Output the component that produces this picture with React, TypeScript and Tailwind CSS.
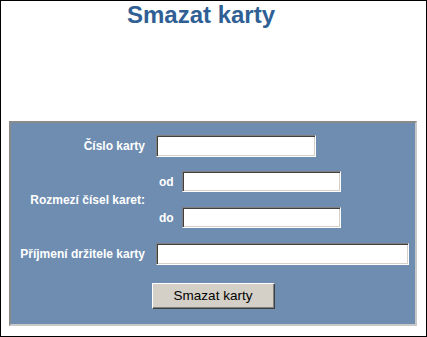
import React from 'react';

const inputCls =
  'h-[22px] bg-white border border-t-[#808080] border-l-[#808080] border-r-white border-b-white shadow-[inset_1px_1px_0_#404040,inset_-1px_-1px_0_#d4d0c8] outline-none px-1 text-[13px]';

export default function App() {
  return (
    <div
      className="w-[427px] h-[337px] box-border border border-black bg-white overflow-hidden"
      style={{ fontFamily: '"Liberation Sans", Arial, sans-serif' }}
    >
      <h1 className="w-[400px] text-center text-[24px] leading-[28px] font-bold text-[#2f5f94]">
        Smazat karty
      </h1>

      <form
        className="mt-[92px] ml-[8px] w-[408px] h-[205px] box-border border-2 border-t-[#8a8a8a] border-l-[#8a8a8a] border-r-[#c8c8c8] border-b-[#c8c8c8] bg-[#6e8db1] pt-[12px]"
        onSubmit={(e) => e.preventDefault()}
      >
        <div className="flex items-center">
          <label className="w-[134px] text-right text-[12px] font-bold text-white">Číslo karty</label>
          <input className={`${inputCls} ml-[11px] w-[160px]`} />
        </div>

        <div className="flex items-center mt-[14px]">
          <label className="w-[134px] text-right text-[12px] font-bold text-white">Rozmezí čísel karet:</label>
          <div className="ml-[11px] flex flex-col gap-[15px]">
            <div className="flex items-center">
              <span className="ml-[3px] w-[23px] text-[12px] font-bold text-white">od</span>
              <input className={`${inputCls} !h-[21px] w-[159px]`} />
            </div>
            <div className="flex items-center">
              <span className="ml-[3px] w-[23px] text-[12px] font-bold text-white">do</span>
              <input className={`${inputCls} !h-[21px] w-[159px]`} />
            </div>
          </div>
        </div>

        <div className="flex items-center mt-[15px]">
          <label className="w-[134px] text-right text-[12px] font-bold text-white">Příjmení držitele karty</label>
          <input className={`${inputCls} ml-[11px] w-[253px]`} />
        </div>

        <div className="flex justify-center mt-[18px]">
          <button
            type="submit"
            className="w-[123px] h-[26px] bg-[#d4d0c8] border border-t-white border-l-white border-r-[#404040] border-b-[#404040] shadow-[inset_-1px_-1px_0_#808080] text-[13.5px] text-black"
          >
            Smazat karty
          </button>
        </div>
      </form>
    </div>
  );
}
